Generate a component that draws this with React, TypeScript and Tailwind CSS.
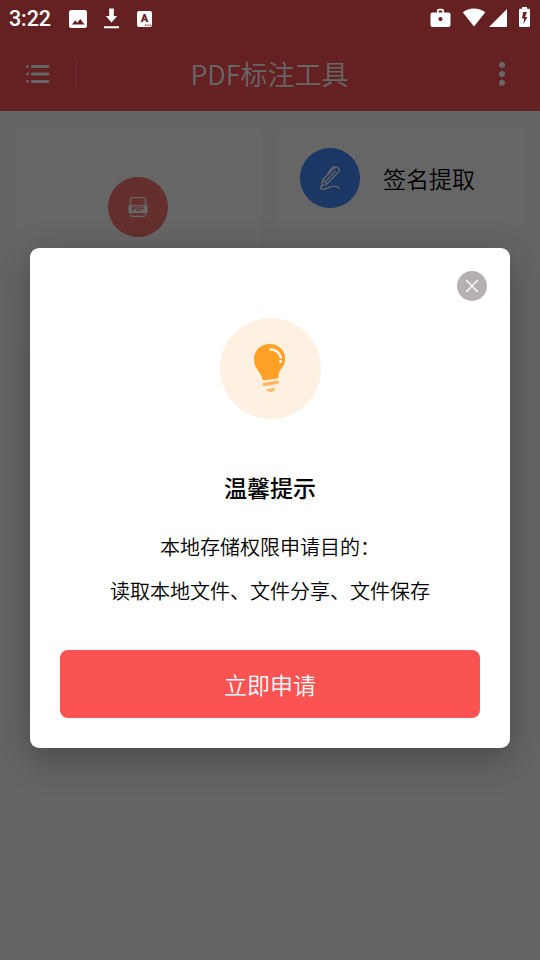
import type { ReactNode } from "react";

function StatusBar() {
  return (
    <div className="relative z-20 flex h-9 items-center text-white">
      <span className="ml-[9px] mt-px w-[61px] font-[Roboto] text-[21.5px] leading-none font-medium tracking-[-0.1px]">
        3:22
      </span>

      {/* Notifications */}
      <svg className="-ml-px mt-px size-[18px] shrink-0" viewBox="0 0 18 18">
        <path
          fill="currentColor"
          fillRule="evenodd"
          d="M2.2 0h13.6A2.2 2.2 0 0 1 18 2.2v13.6a2.2 2.2 0 0 1-2.2 2.2H2.2A2.2 2.2 0 0 1 0 15.8V2.2A2.2 2.2 0 0 1 2.2 0ZM3 14.500h12.500l-4.200-5.500-3 3.800-2.200-2.600Z"
        />
      </svg>
      <svg className="ml-[17px] mt-px h-[21px] w-[15px] shrink-0" viewBox="0 0 15 21">
        <path fill="currentColor" d="M5.200.500h4.600v7.500h3.400L7.500 14.500 1.800 8h3.400ZM0 18.200h15v2H0Z" />
      </svg>
      <div className="ml-[18px] mt-px flex h-[16px] w-[15px] shrink-0 flex-col items-center rounded-[2px] bg-white">
        <span className="font-[Roboto] text-[11px] leading-[15px] font-black text-[#652122]">A</span>
        <svg className="-mt-[2px] ml-[6px] h-[2px] w-[6px] shrink-0" viewBox="0 0 6 2">
          <path d="M0 .500h1.300v1.200H0ZM2.300.500h1.300v1.200H2.300ZM4.600.500h1.300v1.200H4.600Z" fill="#652122" />
        </svg>
      </div>

      {/* System icons */}
      <div className="mr-[10px] ml-auto flex items-center">
        <svg className="-mt-px h-[20px] w-[21px]" viewBox="0 0 21 20">
          <path
            fill="currentColor"
            fillRule="evenodd"
            d="M7 4.500V2.500A2 2 0 0 1 9 .7h3a2 2 0 0 1 2 1.800v2h4.500A2 2 0 0 1 20.500 6.500V17a2 2 0 0 1-2 2h-16a2 2 0 0 1-2-2V6.500a2 2 0 0 1 2-2ZM8.700 4.500h3.600V2.400H8.700ZM10.500 9a2.100 2.100 0 1 0 0 4.200 2.100 2.100 0 0 0 0-4.200Z"
          />
        </svg>
        <svg className="ml-[11px] -mt-px h-[19px] w-[24px]" viewBox="0 0 24 19">
          <path fill="currentColor" d="M.7 4.300C7 -.8 17 -.8 23.300 4.300L12 18.500Z" />
        </svg>
        <svg className="ml-[3px] -mt-px size-[18px]" viewBox="0 0 18 18">
          <path fill="currentColor" d="M18 0v18H0Z" />
        </svg>
        <svg className="-mt-[2px] ml-3 h-[20px] w-[11px]" viewBox="0 0 11 20">
          <path
            fill="currentColor"
            fillRule="evenodd"
            d="M3 0h5v1.800h2A1 1 0 0 1 11 2.800V19a1 1 0 0 1-1 1H1a1 1 0 0 1-1-1V2.800a1 1 0 0 1 1-1h2ZM4.200 5 3 11.400h2.200L4.300 17.300 8.400 10H6L8 5Z"
          />
        </svg>
      </div>
    </div>
  );
}

function TitleBar() {
  return (
    <div className="flex h-[75px] items-center text-white">
      <svg className="ml-[26px] h-[20px] w-[24px]" viewBox="0 0 24 20">
        <g fill="currentColor">
          {[2.5, 10, 17.5].map((y) => (
            <g key={y}>
              <circle cx="1.500" cy={y} r="1.400" />
              <rect x="5" y={y - 1.4} width="18.200" height="2.800" rx="1.200" />
            </g>
          ))}
        </g>
      </svg>
      <span className="ml-[26px] h-[29px] w-px bg-white/25" />
      <h1 className="flex-1 text-center text-[27px] leading-none font-[350]">PDF标注工具</h1>
      <svg className="mr-[34px] ml-[36px] h-[24px] w-[8px]" viewBox="0 0 8 24">
        <g fill="currentColor">
          <circle cx="4" cy="3.100" r="3" />
          <circle cx="4" cy="12" r="3" />
          <circle cx="4" cy="20.800" r="3" />
        </g>
      </svg>
    </div>
  );
}

function Card({ className, children }: { className: string; children?: ReactNode }) {
  return <div className={`rounded-[9px] bg-white shadow-[0_0_2px_#f6f6f6] ${className}`}>{children}</div>;
}

function PdfIcon() {
  return (
    <svg className="size-5" viewBox="0 0 20 20" fill="none">
      <rect x="2.500" y="0.700" width="15" height="18.600" rx="1.500" stroke="white" strokeWidth="1.300" />
      <rect x="0.300" y="8" width="19.400" height="8" rx="1.200" fill="white" />
      <path d="M3 17h14" stroke="#fc7670" strokeWidth="2" />
      <text x="10" y="14.300" textAnchor="middle" fontFamily="Roboto" fontSize="6.500" fontWeight="900" fill="#fc7670">
        PDF
      </text>
    </svg>
  );
}

function PenIcon() {
  return (
    <svg
      className="h-[26px] w-[22px]"
      viewBox="0 0 22 26"
      fill="none"
      stroke="white"
      strokeWidth="1.300"
      strokeLinecap="round"
      strokeLinejoin="round"
    >
      <path d="M3.500 15 15 3.300c1.200-1.200 3-1.300 4.200-.3s1.300 2.700.2 4L8 19l-5.500 2Z" />
      <path d="M3.500 15 8 19M7 16 16.500 6M9 7.500l5.500-6 1.600 1.300" />
      <path d="M2.500 21c-1.500 1.500-1.500 3.500 1.500 3.300 4.500-.3 6.500-3 10.500-3 3 0 5.200.6 6 2.200" />
    </svg>
  );
}

function BulbIcon() {
  return (
    <svg className="h-[50px] w-[34px]" viewBox="0 0 34 50">
      <path
        fill="#ffa126"
        d="M16.500 1C7.500 1 1 7.800 1 16.200c0 9.300 6.700 12.500 8.200 19.200.3 1.600 1.200 2 2.600 1.800l11.700-1.400c1.500-.2 2.200-1 2.100-2.600-.4-6.500 6.600-9 6.600-17.500C32.200 7.200 25.500 1 16.500 1Z"
      />
      <path d="M17.500 6.500c5.500 0 8.900 3.200 10.300 8" fill="none" stroke="#fff1e1" strokeWidth="2.600" strokeLinecap="round" />
      <circle cx="27.600" cy="18.500" r="1.600" fill="#fff1e1" />
      <path d="m11.200 41.500 13-2.300" stroke="#ffb868" strokeWidth="3.500" strokeLinecap="round" />
      <path d="m13 46.300 9.200-1.500c-.5 5.200-6.700 5.500-9.200 1.500Z" fill="#ffb868" />
    </svg>
  );
}

function PermissionDialog() {
  return (
    <div className="absolute inset-0 z-10 bg-black/60 px-[30px] pt-[248px]">
      <div className="flex h-[500px] flex-col items-center rounded-[9px] bg-white px-[30px] text-black shadow-[0_10px_36px_rgba(0,0,0,0.3)]">
        <button className="mt-[23px] -mr-[7px] grid size-[30px] place-items-center self-end rounded-full bg-[#b5b1b1]">
          <svg className="size-3" viewBox="0 0 12 12">
            <path d="m.6.6 10.800 10.800M11.400.6.6 11.400" stroke="white" strokeWidth="1.400" strokeLinecap="round" />
          </svg>
        </button>

        <div className="mt-[17px] grid size-[101px] shrink-0 place-items-center rounded-full bg-[#fff1e1] pb-px">
          <BulbIcon />
        </div>

        <h2 className="mt-[50px] text-[23px] leading-9 font-medium">温馨提示</h2>
        <div className="mt-[20px] text-center text-[20px] leading-[44px] font-[350]">
          <p>本地存储权限申请目的：</p>
          <p>读取本地文件、文件分享、文件保存</p>
        </div>

        <button className="mt-auto mb-[30px] h-[68px] w-full shrink-0 rounded-[8px] bg-[#fb5351] text-[23px] font-[350] text-white">
          立即申请
        </button>
      </div>
    </div>
  );
}

export default function App() {
  return (
    <div
      lang="zh-CN"
      className="relative h-[960px] w-[540px] overflow-hidden bg-[#fcfcfc] font-['Noto_Sans_CJK_SC',sans-serif]"
    >
      {/* The status icons sit above the overlay so they stay bright */}
      <header className="h-[111px] bg-[#fc5355]">
        <StatusBar />
        <TitleBar />
      </header>

      <main className="grid grid-cols-[247px_248px] gap-[15px] px-[15px] pt-[15px]">
        <Card className="flex h-[223px] justify-center pt-[51px] pr-px">
          <div className="grid size-[60px] place-items-center rounded-full bg-[#fc7670]">
            <PdfIcon />
          </div>
        </Card>
        <div className="flex flex-col gap-[15px]">
          <Card className="flex h-[105px] items-center pb-px pl-[23px]">
            <div className="grid size-[60px] place-items-center rounded-full bg-[#438aff]">
              <PenIcon />
            </div>
            <span className="ml-[23px] text-[23px] font-[350] text-black">签名提取</span>
          </Card>
          <Card className="h-[103px]" />
        </div>
      </main>

      <PermissionDialog />
    </div>
  );
}
